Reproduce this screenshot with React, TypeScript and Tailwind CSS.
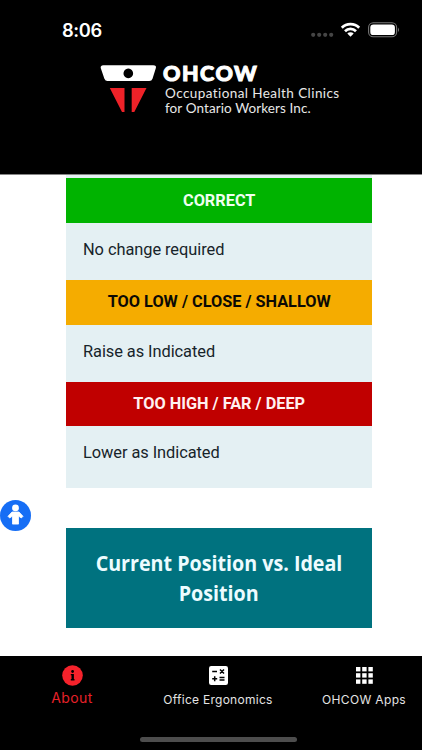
const rows = [
  { title: "CORRECT", text: "No change required", tone: "bg-[#00b300] text-[#effff0]" },
  { title: "TOO LOW / CLOSE / SHALLOW", text: "Raise as Indicated", tone: "bg-[#f5ac00] text-[#0c0a05]" },
  { title: "TOO HIGH / FAR / DEEP", text: "Lower as Indicated", tone: "bg-[#c00000] text-[#fff0f0]" },
];

function StatusBar() {
  return (
    <div className="flex h-[60px] items-start justify-between pl-[62px] pr-[22px] pt-[19px] text-white">
      <span className="font-['Inter',sans-serif] text-[18.3px] font-semibold leading-[23px] tracking-[-0.4px]">8:06</span>
      <svg width="90" height="24" viewBox="310 18 90 24">
        <g fill="#454545">
          <circle cx="313.2" cy="33.8" r="2.1" />
          <circle cx="319.2" cy="33.8" r="2.1" />
          <circle cx="325.2" cy="33.8" r="2.1" />
          <circle cx="331.2" cy="33.8" r="2.1" />
        </g>
        <g transform="translate(0 -1)">
          <g fill="none" stroke="#fff" strokeWidth="2.7">
            <path d="M341.8 27.8 A12.3 12.3 0 0 1 359.2 27.8" />
            <path d="M345 31.2 A7.8 7.8 0 0 1 356 31.2" />
          </g>
          <path fill="#fff" d="M350.5 36.8 L347.3 33.6 A4.5 4.5 0 0 1 353.7 33.6 Z" />
          <rect x="368.6" y="22.8" width="28" height="14" rx="4.6" fill="none" stroke="#777" strokeWidth="1.1" />
          <rect x="370.3" y="24.5" width="24.6" height="10.6" rx="3.2" fill="#fff" />
          <path d="M398 27.5 Q400 29.8 398 32 Z" fill="#777" />
        </g>
      </svg>
    </div>
  );
}

function Logo() {
  return (
    <div className="flex pl-[100px] pt-[4px]">
      <svg width="57" height="50" viewBox="100 64 57 50">
        <path fill="#fff" fillRule="evenodd" d="M103.4 65.2 H153.2 Q156.8 65.4 155.8 68.3 L152.5 78.8 Q151.7 81 149.3 81 H107.5 Q105.3 81 104.4 78.8 L100.8 68.3 Q100 65.5 103.4 65.2 Z M128.3 68.6 a4.8 4.8 0 1 0 0.01 0 Z" />
        <path fill="#ee2228" d="M109.8 88 H124.5 V112 H122 Z M131.7 88 H146.5 L134.3 112 H131.7 Z" />
      </svg>
      <div className="pl-[6px] font-['Lato',sans-serif] text-white">
        <div className="text-[21.5px] font-black leading-[18px] tracking-[1.5px] [-webkit-text-stroke:1px_white]">OHCOW</div>
        <div className="whitespace-nowrap pl-[2px] pt-[4px] text-[13.5px] leading-[15px] text-[#e8e8e8]">
          <div className="tracking-[0.42px]">Occupational Health Clinics</div>
          <div className="tracking-[0.1px]">for Ontario Workers Inc.</div>
        </div>
      </div>
    </div>
  );
}

export default function App() {
  return (
    <div className="relative flex h-[750px] w-[422px] flex-col overflow-hidden bg-white">
      <header className="h-[174px] shrink-0 bg-black">
        <StatusBar />
        <Logo />
      </header>
      <main className="flex-1 border-t border-[#858585] pl-[66.4px] pr-[50px]">
        <div className="h-[313px] bg-[#e4f0f3] pt-[3px] font-['Roboto',sans-serif] text-[16.4px]">
          {rows.map((row) => (
            <section key={row.title} className="h-[101.8px]">
              <h2 className={`flex h-[44.8px] items-center justify-center text-[16.3px] font-bold ${row.tone}`}>
                <span className="whitespace-nowrap pt-px">{row.title}</span>
              </h2>
              <p className="pl-[16.6px] pt-[15px] leading-[24px] tracking-[-0.06px] text-[#17242a]">{row.text}</p>
            </section>
          ))}
        </div>
        <h1 className="mt-[40px] flex h-[100px] flex-col items-center justify-center bg-[#00727f] pb-[2px] font-['Open_Sans',sans-serif] text-[22px] font-bold leading-[30px] text-[#edfcff]">
          <span className="scale-x-[0.894] whitespace-nowrap">Current Position vs. Ideal</span>
          <span className="scale-x-[0.894]">Position</span>
        </h1>
      </main>
      <nav className="flex h-[94px] shrink-0 bg-black font-['Inter',sans-serif] text-[12px] text-[#e4e4e4]">
        <div className="flex w-[144px] shrink-0 flex-col items-center pt-[9px] text-[#e62129]">
          <svg width="21" height="21" viewBox="0 0 21 21">
            <circle cx="10.5" cy="10.5" r="10.3" fill="#f5222b" />
            <circle cx="10.6" cy="6.5" r="1.4" />
            <path d="M8.8 9 H11.9 V14 H12.5 V15.4 H8.8 V14 H9.5 V10.3 H8.8 Z" />
          </svg>
          <span className="pt-[2px] text-[14px] leading-[20px] tracking-[0.45px]">About</span>
        </div>
        <div className="flex w-[148px] shrink-0 flex-col items-center pt-[10px]">
          <svg width="19" height="19" viewBox="0 0 19 19">
            <rect width="19" height="19" rx="2.2" fill="#fff" />
            <path d="M3.2 5.6 H8 M11 3.5 L15 7.5 M15 3.5 L11 7.5 M3.2 12.7 H8.2 M5.7 10.2 V15.2 M10.5 11.5 H15.5 M10.5 14 H15.5" stroke="#000" strokeWidth="1.5" />
          </svg>
          <span className="whitespace-nowrap pt-[5px] leading-[20px] tracking-[0.27px]">Office Ergonomics</span>
        </div>
        <div className="flex w-[130px] flex-col items-center pl-[14px] pt-[11px]">
          <svg width="17" height="17" viewBox="0 0 17 17" fill="#fff">
            {[0, 6.2, 12.4].map((y) => [0, 6.2, 12.4].map((x) => <rect key={`${x}-${y}`} x={x} y={y} width="4.4" height="4.4" />))}
          </svg>
          <span className="whitespace-nowrap pt-[6px] leading-[20px] tracking-[0.35px]">OHCOW Apps</span>
        </div>
      </nav>
      <div className="absolute bottom-[8px] left-[140px] h-[5px] w-[157px] rounded-full bg-[#4d4d4d]" />
      <button className="absolute left-0 top-[500px] h-[31px] w-[31px] rounded-full bg-[#166ef5]">
        <svg width="31" height="31" viewBox="0 0 31 31" fill="#fff">
          <circle cx="15.5" cy="7.9" r="3.4" />
          <path d="M12 12 H19 L23 16.3 L21.3 18 L18.5 16 V24.1 H12.5 V16 L9.7 18 L8 16.3 Z" stroke="#fff" strokeWidth=".8" strokeLinejoin="round" />
        </svg>
      </button>
    </div>
  );
}
